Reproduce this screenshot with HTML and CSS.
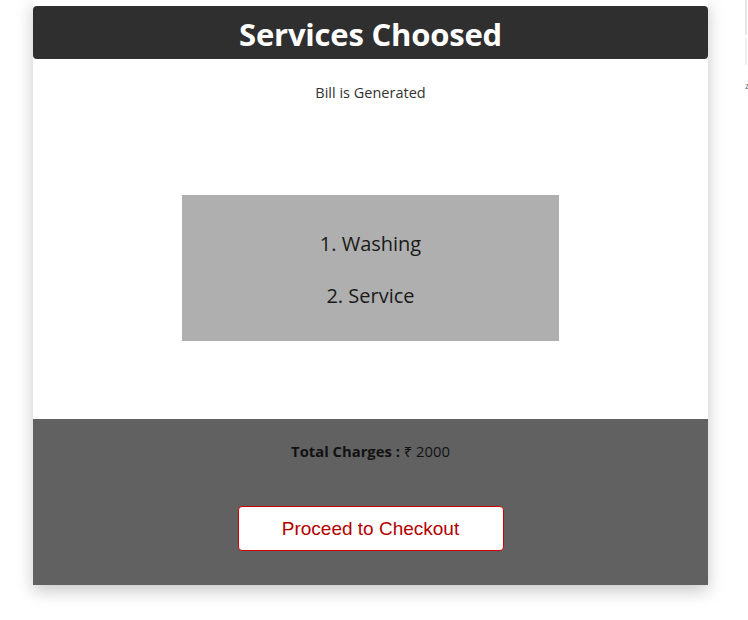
FILE: index.html
```html
<!DOCTYPE html>
<html>
<head>
<meta charset="utf-8">
<link rel="stylesheet" href="styles.css">
</head>
<body>
<div class="page">
  <div class="card">
    <div class="header"><h1>Services Choosed</h1></div>
    <p class="sub">Bill is Generated</p>
    <div class="list-wrap">
      <div class="list">
        <p>1. Washing</p>
        <p>2. Service</p>
      </div>
    </div>
    <div class="footer">
      <p class="total"><b>Total Charges :</b> ₹ 2000</p>
      <button class="checkout">Proceed to Checkout</button>
    </div>
  </div>
  <div class="side">
    <div class="side-a"></div>
    <div class="side-b"></div>
    <span class="side-c">z</span>
  </div>
</div>
</body>
</html>
```
FILE: styles.css
```css
html, body {
  margin: 0;
  padding: 0;
  background: #fff;
  font-family: "Open Sans", "Noto Sans", sans-serif;
}
.page {
  position: relative;
  width: 748px;
  height: 620px;
  overflow: hidden;
}
.card {
  margin-left: 33px;
  width: 675px;
  padding-top: 6px;
  background: #fff;
  box-shadow: 0 6px 16px rgba(0,0,0,0.22);
}
.header {
  background: #2f2f2f;
  border-radius: 4px;
  height: 53px;
  display: flex;
  align-items: center;
  justify-content: center;
}
.header h1 {
  margin: 0;
  padding-top: 2px;
  color: #fff;
  font-size: 31px;
  font-weight: 700;
  letter-spacing: -0.2px;
}
.sub {
  margin: 0;
  padding-top: 24px;
  height: 136px;
  box-sizing: border-box;
  text-align: center;
  font-size: 14.5px;
  color: #333;
}
.list-wrap {
  display: flex;
  justify-content: center;
  padding-bottom: 78px;
}
.list {
  width: 377px;
  height: 146px;
  background: #afafaf;
  display: flex;
  flex-direction: column;
  align-items: center;
  justify-content: center;
  gap: 24px;
  padding-top: 3px;
  box-sizing: border-box;
}
.list p {
  margin: 0;
  font-size: 20px;
  line-height: 28px;
  color: #1a1a1a;
}
.footer {
  background: #616161;
  height: 166px;
  display: flex;
  flex-direction: column;
  align-items: center;
  padding-top: 22px;
  box-sizing: border-box;
}
.total {
  margin: 0;
  font-size: 14.8px;
  line-height: 20px;
  color: #111;
}
.total b { font-weight: 700; }
.checkout {
  margin-top: 45px;
  width: 266px;
  height: 45px;
  background: #fff;
  border: 1px solid #cc0000;
  border-radius: 4px;
  font-family: "Liberation Sans", Arial, sans-serif;
  font-size: 19px;
  color: #b30000;
}
.side {
  position: absolute;
  left: 745px;
  top: 0;
  width: 3px;
}
.side-a {
  height: 35px;
  border-left: 2px solid #e6e6e6;
}
.side-b {
  margin-top: 3px;
  height: 27px;
  border-left: 2px solid #eeeeee;
}
.side-c {
  display: block;
  margin-top: 14px;
  font-size: 9px;
  color: #666;
}
```
